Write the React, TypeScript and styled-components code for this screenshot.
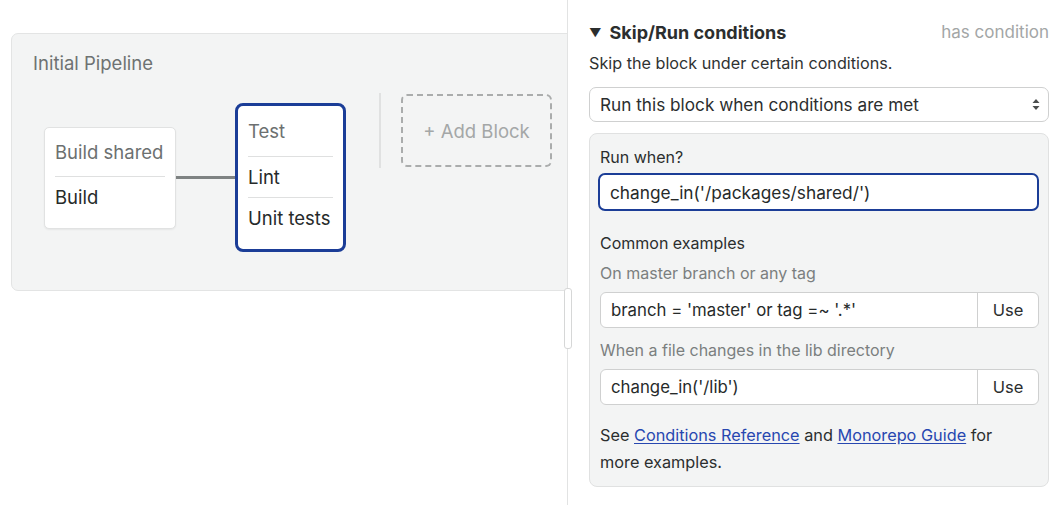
import React from "react";
import styled, { createGlobalStyle } from "styled-components";

const GlobalStyle = createGlobalStyle`
    html, body {
        margin: 0;
        padding: 0;
        background: #ffffff;
        font-family: Inter, "Noto Sans", sans-serif;
        color: #2c2f2f;
    }
`;

const Page = styled.div`
    width: 1056px;
    height: 505px;
    display: flex;
    overflow: hidden;
    position: relative;
`;

const LeftPane = styled.div`
    flex: 0 0 567px;
    padding: 33px 0 0 11px;
    box-sizing: border-box;
    overflow: hidden;
`;

const PipelineCard = styled.div`
    width: 600px;
    height: 258px;
    box-sizing: border-box;
    background: #f3f4f4;
    border: 1px solid #e3e4e4;
    border-radius: 7px;
    padding: 17px 21px;
`;

const PipelineTitle = styled.div`
    font-size: 18.5px;
    line-height: 24px;
    color: #6e7272;
`;

const Diagram = styled.div`
    display: flex;
    align-items: flex-start;
    margin: 18px 0 0 11px;
`;

const StageGroup = styled.div`
    display: flex;
    align-items: center;
    margin-top: 10px;
`;

const Block = styled.div<{ $selected?: boolean }>`
    background: #ffffff;
    box-sizing: border-box;
    border: ${(p) => (p.$selected ? "3px solid #1b3d97" : "1px solid #e1e2e2")};
    border-radius: ${(p) => (p.$selected ? "8px" : "5px")};
    box-shadow: ${(p) => (p.$selected ? "none" : "0 1px 2px rgba(0,0,0,0.06)")};
    width: ${(p) => (p.$selected ? "111px" : "132px")};
    padding: 0 10px ${(p) => (p.$selected ? "11px" : "11px")};
`;

const BlockName = styled.div<{ $compact?: boolean }>`
    height: ${(p) => (p.$compact ? "48px" : "50px")};
    display: flex;
    align-items: center;
    font-size: 18.5px;
    color: #6c7070;
    white-space: nowrap;
    border-bottom: 1px solid #dfe0e0;
`;

const JobRow = styled.div<{ $last?: boolean }>`
    height: 40px;
    display: flex;
    align-items: center;
    font-size: 18.5px;
    color: #262a2a;
    white-space: nowrap;
    border-bottom: ${(p) => (p.$last ? "none" : "1px solid #dfe0e0")};
`;

const Connector = styled.div`
    width: 59px;
    height: 3px;
    background: #7e8282;
`;

const Separator = styled.div`
    width: 2px;
    height: 75px;
    background: #e0e1e1;
    margin-left: 33px;
`;

const AddBlock = styled.div`
    margin-left: 20px;
    margin-top: 1px;
    width: 151px;
    height: 73px;
    box-sizing: border-box;
    border: 2px dashed #aaacac;
    border-radius: 6px;
    display: flex;
    align-items: center;
    justify-content: center;
    font-size: 18.5px;
    color: #a4a7a7;
`;

const RightPane = styled.div`
    flex: 1;
    border-left: 1px solid #e2e3e3;
    padding: 20px 7px 0 21px;
    box-sizing: border-box;
`;

const SplitHandle = styled.div`
    position: absolute;
    left: 564px;
    top: 288px;
    width: 6px;
    height: 59px;
    background: #ffffff;
    border: 1px solid #d6d7d7;
    border-radius: 3px;
`;

const SectionHeader = styled.div`
    display: flex;
    justify-content: space-between;
    align-items: center;
    height: 24px;
`;

const SectionTitle = styled.div`
    display: flex;
    align-items: center;
    gap: 8px;
    font-size: 18px;
    font-weight: 700;
    color: #2b2e2e;
`;

const Caret = styled.span`
    font-size: 12px;
    color: #2b2e2e;
`;

const Muted = styled.div`
    font-size: 17px;
    color: #a3a6a6;
`;

const Description = styled.div`
    margin-top: 7px;
    font-size: 16.2px;
    line-height: 24px;
    color: #2f3232;
`;

const SelectBox = styled.div`
    margin-top: 12px;
    height: 35px;
    box-sizing: border-box;
    border: 1px solid #cfd0d0;
    border-radius: 7px;
    display: flex;
    align-items: center;
    justify-content: space-between;
    padding: 0 8px 0 10px;
    font-size: 17.2px;
    color: #2b2e2e;
`;

const ConditionBox = styled.div`
    margin-top: 11px;
    background: #f3f4f4;
    border: 1px solid #e0e1e1;
    border-radius: 8px;
    padding: 11px 9px 10px 10px;
    height: 354px;
    box-sizing: border-box;
`;

const Label = styled.div<{ $muted?: boolean; $gap?: number }>`
    font-size: 16px;
    line-height: 24px;
    color: ${(p) => (p.$muted ? "#7b7f7f" : "#2b2e2e")};
    margin-top: ${(p) => p.$gap ?? 0}px;
`;

const ConditionInput = styled.div`
    margin-top: 4px;
    margin-left: -2px;
    height: 38px;
    box-sizing: border-box;
    background: #ffffff;
    border: 2px solid #1b3d97;
    border-radius: 7px;
    display: flex;
    align-items: center;
    padding: 0 10px;
    font-size: 17.3px;
    color: #262a2a;
`;

const InputGroup = styled.div`
    margin-top: 7px;
    height: 36px;
    box-sizing: border-box;
    display: flex;
    background: #ffffff;
    border: 1px solid #cfd0d0;
    border-radius: 6px;
    overflow: hidden;
`;

const GroupText = styled.div`
    flex: 1;
    display: flex;
    align-items: center;
    padding: 0 10px;
    font-size: 16.8px;
    color: #262a2a;
`;

const UseButton = styled.div`
    flex: 0 0 60px;
    border-left: 1px solid #cfd0d0;
    display: flex;
    align-items: center;
    justify-content: center;
    font-size: 16.5px;
    color: #2b2e2e;
`;

const Footnote = styled.div`
    margin-top: 17px;
    font-size: 16.3px;
    line-height: 27px;
    color: #2b2e2e;
    width: 420px;
`;

const Link = styled.a`
    color: #2747b0;
    text-decoration: underline;
    text-underline-offset: 2px;
`;

const SelectArrows = () => (
    <svg width="8" height="13" viewBox="0 0 8 13">
        <path d="M4 1 L7.5 5 L0.5 5 Z" fill="#4a4d4d" />
        <path d="M4 12 L7.5 8 L0.5 8 Z" fill="#4a4d4d" />
    </svg>
);

const App = () => {
    return (
        <Page>
            <GlobalStyle />
            <LeftPane>
                <PipelineCard>
                    <PipelineTitle>Initial Pipeline</PipelineTitle>
                    <Diagram>
                        <StageGroup>
                            <Block>
                                <BlockName $compact>Build shared</BlockName>
                                <JobRow $last>Build</JobRow>
                            </Block>
                            <Connector />
                            <Block $selected>
                                <BlockName>Test</BlockName>
                                <JobRow>Lint</JobRow>
                                <JobRow $last>Unit tests</JobRow>
                            </Block>
                        </StageGroup>
                        <Separator />
                        <AddBlock>+ Add Block</AddBlock>
                    </Diagram>
                </PipelineCard>
            </LeftPane>
            <SplitHandle />
            <RightPane>
                <SectionHeader>
                    <SectionTitle>
                        <Caret>▼</Caret>
                        Skip/Run conditions
                    </SectionTitle>
                    <Muted>has condition</Muted>
                </SectionHeader>
                <Description>Skip the block under certain conditions.</Description>
                <SelectBox>
                    Run this block when conditions are met
                    <SelectArrows />
                </SelectBox>
                <ConditionBox>
                    <Label>Run when?</Label>
                    <ConditionInput>change_in('/packages/shared/')</ConditionInput>
                    <Label $gap={20}>Common examples</Label>
                    <Label $muted $gap={6}>
                        On master branch or any tag
                    </Label>
                    <InputGroup>
                        <GroupText>branch = 'master' or tag =~ '.*'</GroupText>
                        <UseButton>Use</UseButton>
                    </InputGroup>
                    <Label $muted $gap={10}>
                        When a file changes in the lib directory
                    </Label>
                    <InputGroup>
                        <GroupText>change_in('/lib')</GroupText>
                        <UseButton>Use</UseButton>
                    </InputGroup>
                    <Footnote>
                        See <Link>Conditions Reference</Link> and <Link>Monorepo Guide</Link> for more
                        examples.
                    </Footnote>
                </ConditionBox>
            </RightPane>
        </Page>
    );
};

export default App;
